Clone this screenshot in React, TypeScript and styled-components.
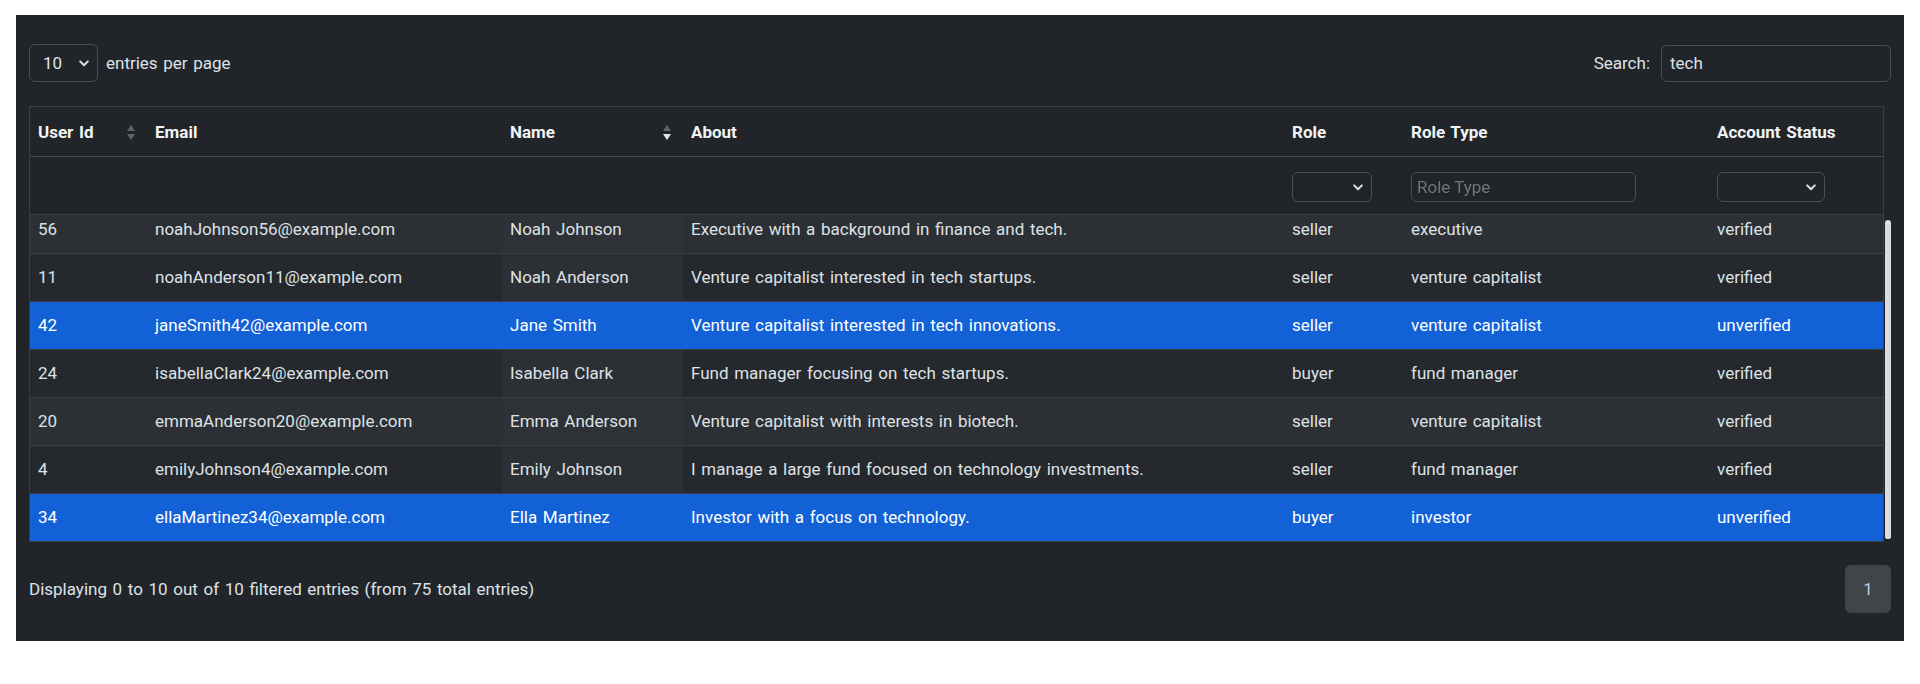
import React, { useLayoutEffect, useRef } from "react";
import styled, { createGlobalStyle, css } from "styled-components";

const GlobalStyle = createGlobalStyle`
  html, body { margin: 0; padding: 0; background: #ffffff; }
  body { font-family: Roboto, "Liberation Sans", sans-serif; }
  * { box-sizing: border-box; }
`;

const Page = styled.div`
  padding: 15px 16px 43px;
`;

const Panel = styled.div`
  background: #212529;
  color: #dee2e6;
  font-size: 17px;
  word-spacing: 1.4px;
  padding: 29px 13px 28px;
  display: flex;
  flex-direction: column;
`;

const Controls = styled.div`
  display: flex;
  justify-content: space-between;
  align-items: center;
  height: 38px;
  margin-bottom: 24px;
`;

const Group = styled.div<{ $gap: number }>`
  display: flex;
  align-items: center;
  gap: ${(p) => p.$gap}px;
`;

const FakeSelect = styled.div<{ $w: number; $h: number }>`
  width: ${(p) => p.$w}px;
  height: ${(p) => p.$h}px;
  border: 1px solid #495057;
  border-radius: 6px;
  display: flex;
  align-items: center;
  justify-content: space-between;
  padding: 0 8px 0 13px;
  color: #dee2e6;
`;

const TextInput = styled.input<{ $w: number; $h: number; $pad?: number }>`
  width: ${(p) => p.$w}px;
  height: ${(p) => p.$h}px;
  border: 1px solid #495057;
  border-radius: 6px;
  background: transparent;
  color: #dee2e6;
  font: inherit;
  padding: 0 ${(p) => p.$pad ?? 8}px;
  outline: none;
  &::placeholder { color: #6c757d; }
`;

const ScrollArea = styled.div`
  display: flex;
  height: 436px;
`;

const Viewport = styled.div`
  flex: 1;
  min-width: 0;
  height: 100%;
  overflow: hidden;
`;

const Track = styled.div`
  width: 7px;
  display: flex;
  flex-direction: column;
  justify-content: flex-end;
  align-items: flex-end;
  padding-bottom: 3px;
`;

const Thumb = styled.div`
  width: 6px;
  height: 319px;
  background: #dcdcdc;
  border-radius: 3px 3px 2px 2px;
`;

const Table = styled.table`
  width: 100%;
  table-layout: fixed;
  border-collapse: separate;
  border-spacing: 0;
  border-left: 1px solid #3a3e42;
  border-right: 1px solid #3a3e42;
`;

const Head = styled.thead`
  position: sticky;
  top: 0;
  z-index: 2;
`;

const Th = styled.th<{ $sort?: boolean }>`
  background: #212529;
  color: #f1f3f5;
  font-weight: 700;
  text-align: left;
  line-height: 24px;
  padding: 13px ${(p) => (p.$sort ? 12 : 8)}px 12px 8px;
  border-top: 1px solid #3a3e42;
  border-bottom: 1px solid #45494e;
  white-space: nowrap;
`;

const HeadInner = styled.div`
  display: flex;
  align-items: center;
  justify-content: space-between;
`;

const FilterTd = styled.td`
  background: #212529;
  padding: 15px 8px 12px;
  border-bottom: 1px solid #3a3e42;
  height: 58px;
  vertical-align: top;
`;

const Row = styled.tr<{ $striped: boolean; $selected: boolean }>`
  background: ${(p) => (p.$selected ? "#1261d6" : p.$striped ? "#2c2f33" : "#25282c")};
  color: ${(p) => (p.$selected ? "#ffffff" : "#dee2e6")};
`;

const Td = styled.td<{ $sorted?: boolean; $striped?: boolean; $selected?: boolean }>`
  padding: 12px 8px;
  line-height: 23px;
  border-bottom: 1px solid #3a3e42;
  white-space: nowrap;
  overflow: hidden;
  ${(p) =>
    p.$sorted &&
    !p.$selected &&
    css`
      background: ${p.$striped ? "#2e3135" : "#2c2f33"};
    `}
`;

const Footer = styled.div`
  display: flex;
  justify-content: space-between;
  align-items: center;
  height: 48px;
  margin-top: 23px;
`;

const PageButton = styled.div`
  width: 46px;
  height: 48px;
  border-radius: 6px;
  background: #414448;
  color: #b4cbf3;
  display: flex;
  align-items: center;
  justify-content: center;
`;

const Chevron = () => (
  <svg width="10" height="7" viewBox="0 0 10 7" fill="none">
    <path d="M1.2 1.4L5 5.2L8.8 1.4" stroke="#dee2e6" strokeWidth="2" strokeLinecap="round" strokeLinejoin="round" />
  </svg>
);

const SortIcon = ({ dir }: { dir?: "asc" | "desc" }) => (
  <svg width="8" height="15" viewBox="0 0 8 15">
    <polygon points="0,6 4,0 8,6" fill={dir === "asc" ? "#e6e6e6" : "#5f6266"} />
    <polygon points="0,9 8,9 4,15" fill={dir === "desc" ? "#e6e6e6" : "#5f6266"} />
  </svg>
);

type User = {
  id: number;
  email: string;
  name: string;
  about: string;
  role: string;
  roleType: string;
  status: string;
  selected?: boolean;
};

const users: User[] = [
  { id: 56, email: "noahJohnson56@example.com", name: "Noah Johnson", about: "Executive with a background in finance and tech.", role: "seller", roleType: "executive", status: "verified" },
  { id: 11, email: "noahAnderson11@example.com", name: "Noah Anderson", about: "Venture capitalist interested in tech startups.", role: "seller", roleType: "venture capitalist", status: "verified" },
  { id: 42, email: "janeSmith42@example.com", name: "Jane Smith", about: "Venture capitalist interested in tech innovations.", role: "seller", roleType: "venture capitalist", status: "unverified", selected: true },
  { id: 24, email: "isabellaClark24@example.com", name: "Isabella Clark", about: "Fund manager focusing on tech startups.", role: "buyer", roleType: "fund manager", status: "verified" },
  { id: 20, email: "emmaAnderson20@example.com", name: "Emma Anderson", about: "Venture capitalist with interests in biotech.", role: "seller", roleType: "venture capitalist", status: "verified" },
  { id: 4, email: "emilyJohnson4@example.com", name: "Emily Johnson", about: "I manage a large fund focused on technology investments.", role: "seller", roleType: "fund manager", status: "verified" },
  { id: 34, email: "ellaMartinez34@example.com", name: "Ella Martinez", about: "Investor with a focus on technology.", role: "buyer", roleType: "investor", status: "unverified", selected: true },
];

const colWidths = [117, 355, 181, 601, 119, 306, 174];

export default function App() {
  const boxRef = useRef<HTMLDivElement>(null);
  useLayoutEffect(() => {
    const el = boxRef.current;
    if (el) el.scrollTop = el.scrollHeight - el.clientHeight;
  }, []);

  return (
    <Page>
      <GlobalStyle />
      <Panel>
        <Controls>
          <Group $gap={8}>
            <FakeSelect $w={69} $h={38}>
              <span>10</span>
              <Chevron />
            </FakeSelect>
            <span>entries per page</span>
          </Group>
          <Group $gap={11}>
            <span>Search:</span>
            <TextInput $w={230} $h={37} defaultValue="tech" />
          </Group>
        </Controls>

        <ScrollArea>
          <Viewport ref={boxRef}>
            <Table>
              <colgroup>
                {colWidths.map((w, i) => (
                  <col key={i} style={{ width: w }} />
                ))}
              </colgroup>
              <Head>
                <tr>
                  <Th $sort>
                    <HeadInner>
                      <span>User Id</span>
                      <SortIcon />
                    </HeadInner>
                  </Th>
                  <Th>Email</Th>
                  <Th $sort>
                    <HeadInner>
                      <span>Name</span>
                      <SortIcon dir="desc" />
                    </HeadInner>
                  </Th>
                  <Th>About</Th>
                  <Th>Role</Th>
                  <Th>Role Type</Th>
                  <Th>Account Status</Th>
                </tr>
                <tr>
                  <FilterTd />
                  <FilterTd />
                  <FilterTd />
                  <FilterTd />
                  <FilterTd>
                    <FakeSelect $w={80} $h={30}>
                      <span />
                      <Chevron />
                    </FakeSelect>
                  </FilterTd>
                  <FilterTd>
                    <TextInput $w={225} $h={30} $pad={5} placeholder="Role Type" />
                  </FilterTd>
                  <FilterTd>
                    <FakeSelect $w={108} $h={30}>
                      <span />
                      <Chevron />
                    </FakeSelect>
                  </FilterTd>
                </tr>
              </Head>
              <tbody>
                {users.map((u, i) => {
                  const striped = i % 2 === 0;
                  const selected = !!u.selected;
                  return (
                    <Row key={u.id} $striped={striped} $selected={selected}>
                      <Td>{u.id}</Td>
                      <Td>{u.email}</Td>
                      <Td $sorted $striped={striped} $selected={selected}>
                        {u.name}
                      </Td>
                      <Td>{u.about}</Td>
                      <Td>{u.role}</Td>
                      <Td>{u.roleType}</Td>
                      <Td>{u.status}</Td>
                    </Row>
                  );
                })}
              </tbody>
            </Table>
          </Viewport>
          <Track>
            <Thumb />
          </Track>
        </ScrollArea>

        <Footer>
          <span>Displaying 0 to 10 out of 10 filtered entries (from 75 total entries)</span>
          <PageButton>1</PageButton>
        </Footer>
      </Panel>
    </Page>
  );
}
